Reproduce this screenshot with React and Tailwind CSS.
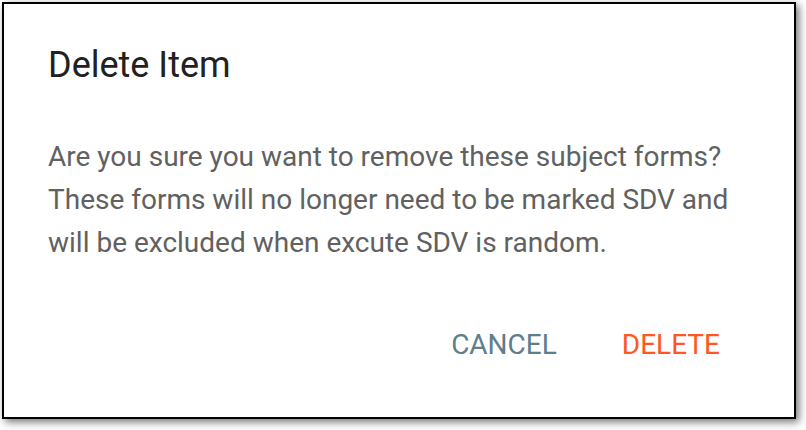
export default function App() {
  return (
    <div className="w-[806px] h-[430px] bg-white pt-[2px] pl-[2px]" style={{ fontFamily: "Roboto, 'Liberation Sans', sans-serif" }}>
      <div className="w-[794px] h-[417px] border-2 border-black bg-white shadow-[3px_3px_8px_rgba(0,0,0,0.55)] px-[44px] pt-[43px] flex flex-col">
        <h1 className="text-[36px] leading-[36px] font-normal text-[#212121]">Delete Item</h1>
        <p className="mt-[52px] text-[28px] leading-[43px] text-[#616161]">
          Are you sure you want to remove these subject forms?
          <br />
          These forms will no longer need to be marked SDV and
          <br />
          will be excluded when excute SDV is random.
        </p>
        <div className="mt-[67px] flex justify-end gap-[65px] pr-[30px]">
          <button className="text-[28px] leading-[28px] text-[#607d8b]">CANCEL</button>
          <button className="text-[28px] leading-[28px] text-[#ff5722]">DELETE</button>
        </div>
      </div>
    </div>
  );
}
